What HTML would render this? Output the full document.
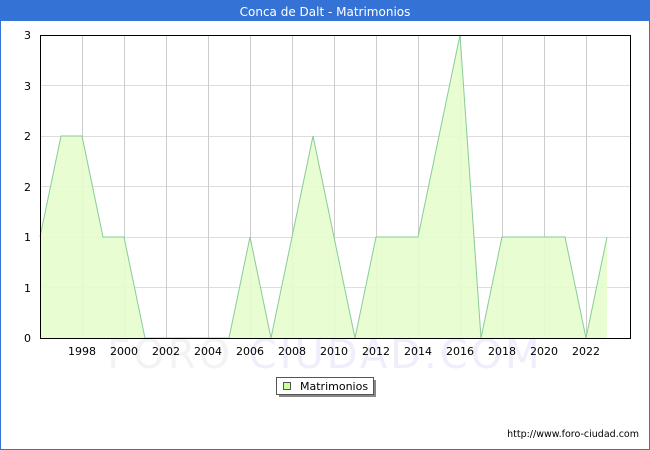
<!DOCTYPE html>
<html><head><meta charset="utf-8"><style>
html,body{margin:0;padding:0;background:#fff;}
svg{display:block;font-family:"DejaVu Sans","Liberation Sans",sans-serif;}
</style></head><body>
<svg width="650" height="450" viewBox="0 0 650 450" xmlns="http://www.w3.org/2000/svg">
<rect x="0.5" y="0.5" width="649" height="449" fill="#fff" stroke="#3473d5"/>
<rect x="0" y="0" width="650" height="21" fill="#3473d5"/>
<text x="325" y="16" font-size="12" fill="#fff" text-anchor="middle">Conca de Dalt - Matrimonios</text>
<text x="325" y="368" font-size="40" fill="#f3f3f3" text-anchor="middle" letter-spacing="3">FORO <tspan fill="#eeeefc">CIUDAD.COM</tspan></text>
<g stroke="#dddddd" stroke-width="1">
<line x1="40" y1="85.5" x2="630" y2="85.5"/><line x1="40" y1="136.5" x2="630" y2="136.5"/><line x1="40" y1="186.5" x2="630" y2="186.5"/><line x1="40" y1="237.5" x2="630" y2="237.5"/><line x1="40" y1="287.5" x2="630" y2="287.5"/>
</g>
<g stroke="#cccccc" stroke-width="1">
<line x1="82.5" y1="35" x2="82.5" y2="338"/><line x1="124.5" y1="35" x2="124.5" y2="338"/><line x1="166.5" y1="35" x2="166.5" y2="338"/><line x1="208.5" y1="35" x2="208.5" y2="338"/><line x1="250.5" y1="35" x2="250.5" y2="338"/><line x1="292.5" y1="35" x2="292.5" y2="338"/><line x1="334.5" y1="35" x2="334.5" y2="338"/><line x1="376.5" y1="35" x2="376.5" y2="338"/><line x1="418.5" y1="35" x2="418.5" y2="338"/><line x1="460.5" y1="35" x2="460.5" y2="338"/><line x1="502.5" y1="35" x2="502.5" y2="338"/><line x1="544.5" y1="35" x2="544.5" y2="338"/><line x1="586.5" y1="35" x2="586.5" y2="338"/>
</g>
<polygon fill="#e5fdcc" fill-opacity="0.9" points="40,338 40,237 61,136 82,136 103,237 124,237 145,338 229,338 250,237 271,338 292,237 313,136 334,237 355,338 376,237 418,237 439,136 460,35 481,338 502,237 565,237 586,338 607,237 607,338"/>
<polyline fill="none" stroke="#88cc99" stroke-width="1" points="40,237 61,136 82,136 103,237 124,237 145,338 229,338 250,237 271,338 292,237 313,136 334,237 355,338 376,237 418,237 439,136 460,35 481,338 502,237 565,237 586,338 607,237"/>
<rect x="40.5" y="35.5" width="590" height="303" fill="none" stroke="#000" stroke-width="1"/>
<g font-size="11" fill="#000" text-anchor="end">
<text x="31" y="39">3</text><text x="31" y="90">3</text><text x="31" y="140">2</text><text x="31" y="191">2</text><text x="31" y="241">1</text><text x="31" y="292">1</text><text x="31" y="342">0</text>
</g>
<g font-size="11" fill="#000" text-anchor="middle">
<text x="82" y="355">1998</text><text x="124" y="355">2000</text><text x="166" y="355">2002</text><text x="208" y="355">2004</text><text x="250" y="355">2006</text><text x="292" y="355">2008</text><text x="334" y="355">2010</text><text x="376" y="355">2012</text><text x="418" y="355">2014</text><text x="460" y="355">2016</text><text x="502" y="355">2018</text><text x="544" y="355">2020</text><text x="586" y="355">2022</text>
</g>
<rect x="279" y="380" width="97" height="17" fill="#888"/>
<rect x="276.5" y="377.5" width="97" height="17" fill="#fff" stroke="#555"/>
<rect x="283.5" y="382.5" width="7" height="7" fill="#ccff99" stroke="#555"/>
<text x="300" y="390" font-size="11" fill="#000">Matrimonios</text>
<text x="639" y="437" font-size="9.5" fill="#000" text-anchor="end">http://www.foro-ciudad.com</text>
</svg>
</body></html>
